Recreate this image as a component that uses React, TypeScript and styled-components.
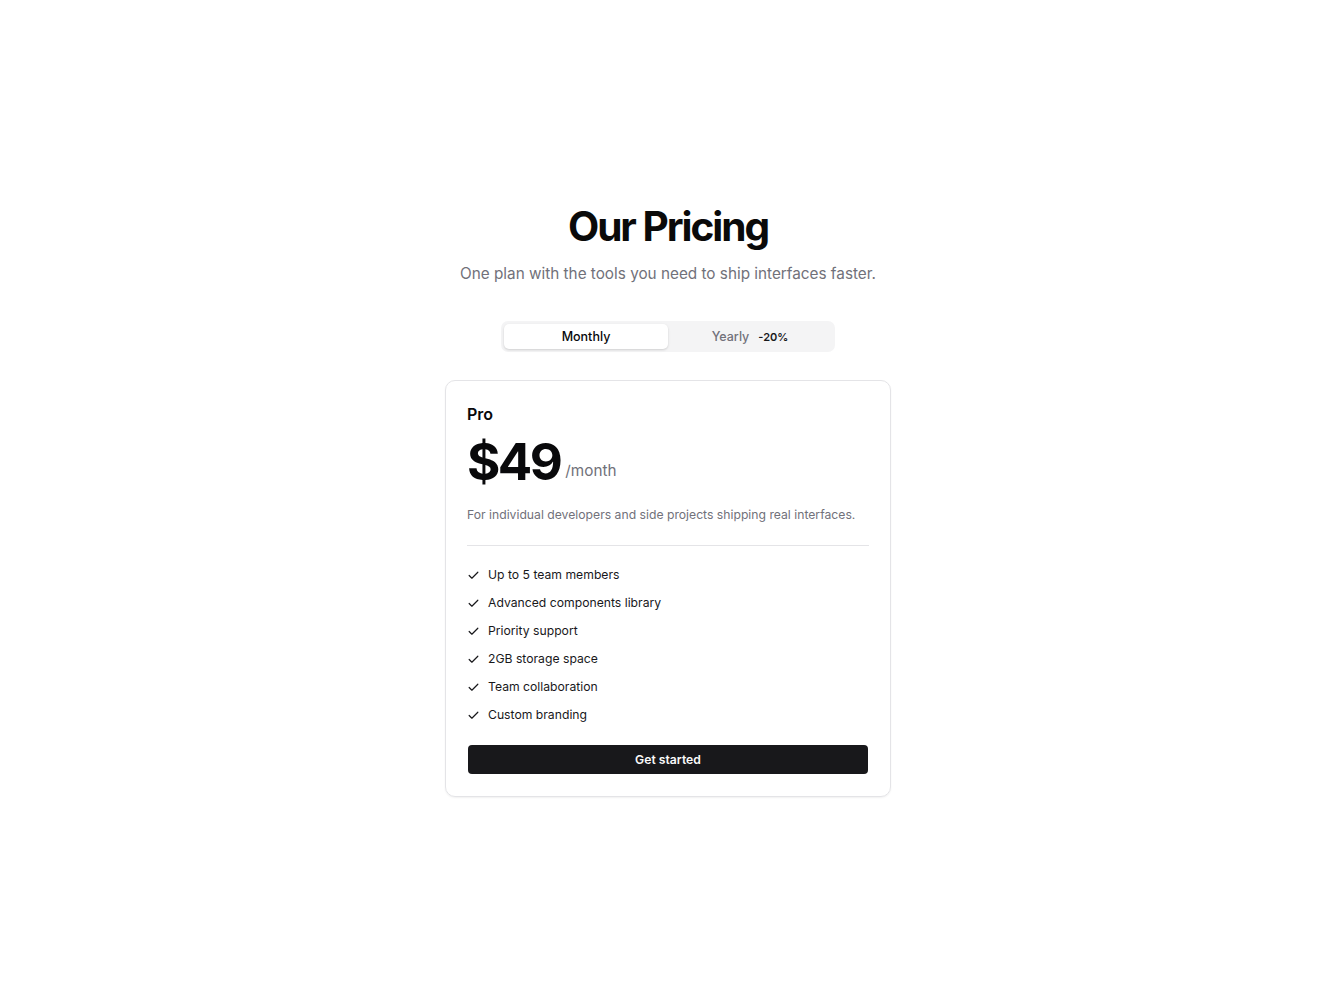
import React from "react";
import styled, { createGlobalStyle } from "styled-components";

const Global = createGlobalStyle`
  html, body { margin: 0; padding: 0; background: #ffffff; }
  body { font-family: Inter, "Noto Sans", sans-serif; color: #09090b; -webkit-font-smoothing: antialiased; }
  * { box-sizing: border-box; }
`;

const Page = styled.main`
  min-height: 1002px;
  display: flex;
  flex-direction: column;
  align-items: center;
  padding-top: 203px;
`;

const Title = styled.h1`
  margin: 0;
  font-size: 40.6px;
  line-height: 48px;
  font-weight: 700;
  letter-spacing: -0.05em;
  color: #0a0a0a;
`;

const Subtitle = styled.p`
  margin: 11px 0 0;
  font-size: 15.3px;
  line-height: 24px;
  color: #71717a;
`;

const Toggle = styled.div`
  margin-top: 35px;
  width: 334px;
  height: 31px;
  padding: 3px;
  display: grid;
  grid-template-columns: 1fr 1fr;
  background: #f4f4f5;
  border-radius: 7px;
`;

const Tab = styled.button<{ $active?: boolean }>`
  border: none;
  border-radius: 5px;
  font-family: inherit;
  font-size: 12.5px;
  font-weight: 500;
  display: flex;
  align-items: center;
  justify-content: center;
  gap: 9px;
  cursor: pointer;
  background: ${(p) => (p.$active ? "#ffffff" : "transparent")};
  color: ${(p) => (p.$active ? "#09090b" : "#71717a")};
  box-shadow: ${(p) => (p.$active ? "0 1px 3px rgba(0,0,0,0.1), 0 1px 2px rgba(0,0,0,0.06)" : "none")};
`;

const Badge = styled.span`
  font-size: 11px;
  font-weight: 600;
  color: #18181b;
`;

const Card = styled.section`
  margin-top: 28px;
  width: 446px;
  border: 1px solid #e4e4e7;
  border-radius: 10px;
  padding: 22px 21px 22px;
  box-shadow: 0 1px 2px rgba(0,0,0,0.06);
  display: flex;
  flex-direction: column;
`;

const PlanName = styled.h2`
  margin: 0;
  font-size: 16px;
  line-height: 22px;
  font-weight: 600;
`;

const PriceRow = styled.div`
  margin-top: 8px;
  display: flex;
  align-items: flex-end;
  gap: 5px;
`;

const Price = styled.span`
  font-size: 51px;
  line-height: 58px;
  font-weight: 700;
  letter-spacing: -0.05em;
`;

const Per = styled.span`
  font-size: 15.3px;
  line-height: 19px;
  padding-bottom: 11px;
  color: #71717a;
`;

const Description = styled.p`
  margin: 15px 0 0;
  font-size: 12.2px;
  line-height: 18px;
  color: #71717a;
`;

const Divider = styled.hr`
  margin: 21px 0 0;
  border: none;
  border-top: 1px solid #e4e4e7;
`;

const Features = styled.ul`
  list-style: none;
  margin: 20px 0 0;
  padding: 0;
  display: flex;
  flex-direction: column;
  gap: 10px;
`;

const Feature = styled.li`
  display: flex;
  align-items: center;
  gap: 8px;
  font-size: 12.2px;
  line-height: 18px;
  color: #18181b;
`;

const Button = styled.button`
  margin: 21px 1px 0;
  height: 29px;
  border: none;
  border-radius: 4px;
  background: #18181b;
  color: #fafafa;
  font-family: inherit;
  font-size: 12.2px;
  font-weight: 600;
  cursor: pointer;
`;

const Check = () => (
  <svg width="13" height="13" viewBox="0 0 24 24" fill="none" stroke="#18181b" strokeWidth="2.2" strokeLinecap="round" strokeLinejoin="round">
    <path d="M20 6 9 17l-5-5" />
  </svg>
);

const features = [
  "Up to 5 team members",
  "Advanced components library",
  "Priority support",
  "2GB storage space",
  "Team collaboration",
  "Custom branding",
];

export default function App() {
  return (
    <>
      <Global />
      <Page>
        <Title>Our Pricing</Title>
        <Subtitle>One plan with the tools you need to ship interfaces faster.</Subtitle>
        <Toggle>
          <Tab $active>Monthly</Tab>
          <Tab>
            Yearly <Badge>-20%</Badge>
          </Tab>
        </Toggle>
        <Card>
          <PlanName>Pro</PlanName>
          <PriceRow>
            <Price>$49</Price>
            <Per>/month</Per>
          </PriceRow>
          <Description>For individual developers and side projects shipping real interfaces.</Description>
          <Divider />
          <Features>
            {features.map((f) => (
              <Feature key={f}>
                <Check />
                {f}
              </Feature>
            ))}
          </Features>
          <Button>Get started</Button>
        </Card>
      </Page>
    </>
  );
}
